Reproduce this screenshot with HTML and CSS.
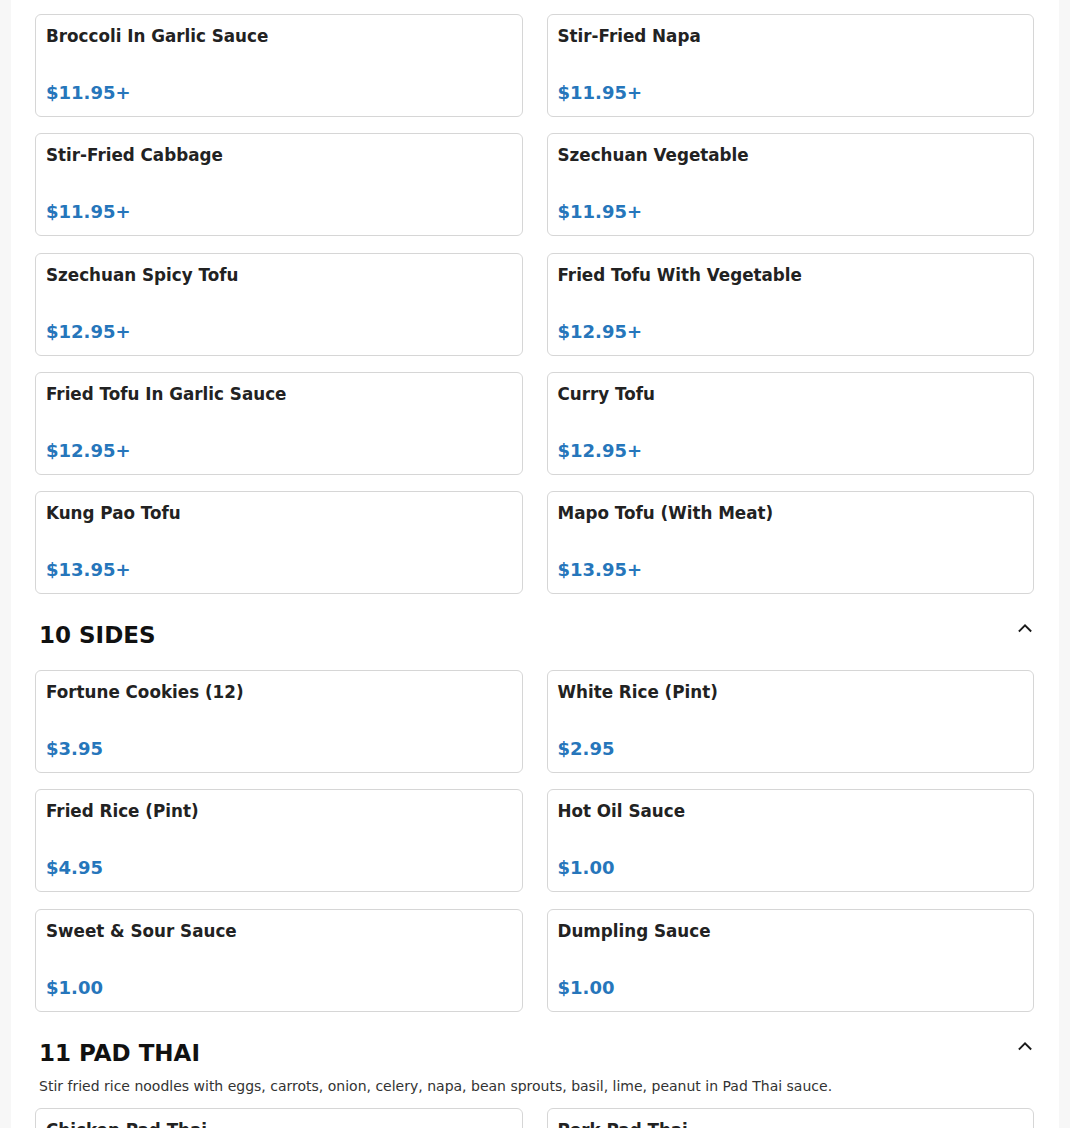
FILE: index.html
```html
<!DOCTYPE html>
<html lang="en">
<head>
<meta charset="utf-8">
<title>Menu</title>
<link rel="stylesheet" href="styles.css">
</head>
<body>
<main class="menu">
  <section class="section">
    <div class="grid">
      <div class="card"><div class="card-title">Broccoli In Garlic Sauce</div><div class="card-price">$11.95+</div></div>
      <div class="card"><div class="card-title">Stir-Fried Napa</div><div class="card-price">$11.95+</div></div>
      <div class="card"><div class="card-title">Stir-Fried Cabbage</div><div class="card-price">$11.95+</div></div>
      <div class="card"><div class="card-title">Szechuan Vegetable</div><div class="card-price">$11.95+</div></div>
      <div class="card"><div class="card-title">Szechuan Spicy Tofu</div><div class="card-price">$12.95+</div></div>
      <div class="card"><div class="card-title">Fried Tofu With Vegetable</div><div class="card-price">$12.95+</div></div>
      <div class="card"><div class="card-title">Fried Tofu In Garlic Sauce</div><div class="card-price">$12.95+</div></div>
      <div class="card"><div class="card-title">Curry Tofu</div><div class="card-price">$12.95+</div></div>
      <div class="card"><div class="card-title">Kung Pao Tofu</div><div class="card-price">$13.95+</div></div>
      <div class="card"><div class="card-title">Mapo Tofu (With Meat)</div><div class="card-price">$13.95+</div></div>
    </div>
  </section>

  <section class="section">
    <div class="section-head section-head--solo">
      <h2 class="section-title">10 SIDES</h2>
      <svg class="chevron" viewBox="0 0 20 20" width="20" height="20" aria-hidden="true"><path d="M4.5 12.8 10 7.3l5.5 5.5" fill="none" stroke="#1a1a1a" stroke-width="1.9" stroke-linecap="square" stroke-linejoin="miter"/></svg>
    </div>
    <div class="grid">
      <div class="card"><div class="card-title">Fortune Cookies (12)</div><div class="card-price">$3.95</div></div>
      <div class="card"><div class="card-title">White Rice (Pint)</div><div class="card-price">$2.95</div></div>
      <div class="card"><div class="card-title">Fried Rice (Pint)</div><div class="card-price">$4.95</div></div>
      <div class="card"><div class="card-title">Hot Oil Sauce</div><div class="card-price">$1.00</div></div>
      <div class="card"><div class="card-title">Sweet &amp; Sour Sauce</div><div class="card-price">$1.00</div></div>
      <div class="card"><div class="card-title">Dumpling Sauce</div><div class="card-price">$1.00</div></div>
    </div>
  </section>

  <section class="section">
    <div class="section-head">
      <h2 class="section-title">11 PAD THAI</h2>
      <svg class="chevron" viewBox="0 0 20 20" width="20" height="20" aria-hidden="true"><path d="M4.5 12.8 10 7.3l5.5 5.5" fill="none" stroke="#1a1a1a" stroke-width="1.9" stroke-linecap="square" stroke-linejoin="miter"/></svg>
    </div>
    <p class="section-desc">Stir fried rice noodles with eggs, carrots, onion, celery, napa, bean sprouts, basil, lime, peanut in Pad Thai sauce.</p>
    <div class="grid">
      <div class="card"><div class="card-title">Chicken Pad Thai</div><div class="card-price">$13.95+</div></div>
      <div class="card"><div class="card-title">Pork Pad Thai</div><div class="card-price">$13.95+</div></div>
    </div>
  </section>
</main>
</body>
</html>
```

FILE: styles.css
```css
html, body {
  margin: 0;
  padding: 0;
}

body {
  background: #f7f7f7;
  font-family: "DejaVu Sans", Verdana, sans-serif;
  color: #222;
}

.menu {
  width: 1048px;
  margin: 0 auto;
  background: #ffffff;
  padding: 14px 25px 40px 24px;
  box-sizing: border-box;
}

.section + .section {
  margin-top: 27px;
}

.grid {
  display: grid;
  grid-template-columns: 1fr 1fr;
  column-gap: 24px;
  row-gap: 16.25px;
}

.card {
  border: 1px solid #d6d6d6;
  border-radius: 6px;
  padding: 10px 10px 9px;
  display: flex;
  flex-direction: column;
  min-height: 82px;
}

.card-title {
  font-size: 16.75px;
  line-height: 22px;
  font-weight: bold;
  color: #222;
}

.card-price {
  margin-top: auto;
  font-size: 18px;
  line-height: 28px;
  font-weight: bold;
  color: #2676bb;
}

.section-head {
  display: flex;
  justify-content: space-between;
  align-items: flex-start;
  padding-left: 4px;
  margin-bottom: 9px;
}

.section-head--solo {
  margin-bottom: 21px;
}

.section-title {
  margin: 0;
  font-size: 23px;
  line-height: 28px;
  font-weight: bold;
  color: #111;
}

.chevron {
  display: block;
  margin-top: -3px;
  margin-right: -1px;
}

.section-desc {
  margin: 0 0 12px;
  padding-left: 4px;
  font-size: 14px;
  line-height: 20px;
  color: #333;
}
```
